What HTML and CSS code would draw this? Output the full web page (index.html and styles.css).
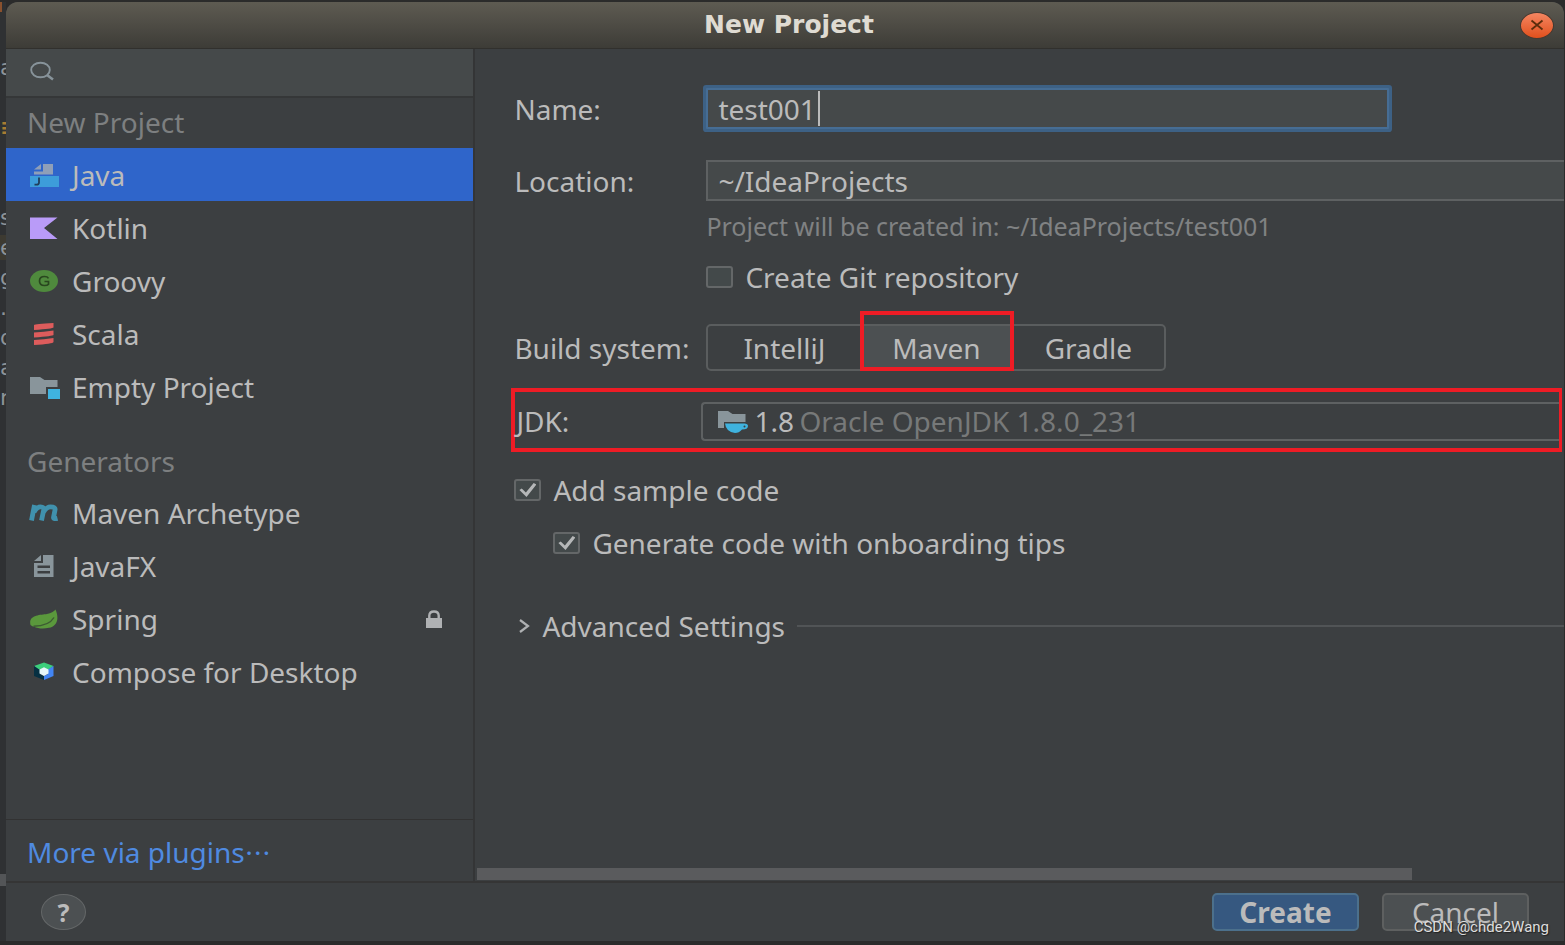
FILE: index.html
```html
<!DOCTYPE html>
<html lang="en">
<head>
<meta charset="utf-8">
<title>New Project</title>
<link rel="stylesheet" href="styles.css">
</head>
<body>
<div class="desktop">
  <div class="editor-edge" aria-hidden="true">
    <i class="edge-mark"></i>
    <pre class="edge-code">a

<b>≡</b>


s
<span>e</span>
g
.
d
a
n</pre>
    <i class="edge-scroll"></i>
  </div>
  <section class="dialog" aria-label="New Project">
    <header class="titlebar">
      <h1 class="title">New Project</h1>
      <button class="close" type="button" aria-label="Close">
        <svg width="14" height="12" viewBox="0 0 14 12"><path d="M1.500 1.500 L12.500 10.500 M12.500 1.500 L1.500 10.500" stroke="#5b2d0c" stroke-width="1.800" fill="none"/></svg>
      </button>
    </header>
    <div class="content">
      <aside class="sidebar">
        <label class="search">
          <svg width="26" height="20" viewBox="0 0 26 20" fill="none" stroke="#87939a" stroke-width="1.900"><ellipse cx="10.500" cy="9" rx="9.300" ry="7.300"/><path d="M17 14 L23 18.500" stroke-width="2.600"/></svg>
          <input type="text" aria-label="Search">
        </label>
        <nav class="list">
          <h2 class="heading">New Project</h2>
          <button class="item selected" type="button">
            <svg class="icon" viewBox="0 0 32 24"><path d="M5 6.500 L12 1 V6.500Z M14 1 H24 V11.500 H5 V8.500 H14Z" fill="#8f9fb8"/><rect x="1" y="13" width="29" height="11" fill="#3d9dda"/><path d="M10 14.500 V19.500 Q10 21.700 7.500 21.700 H5.500" fill="none" stroke="#213e5a" stroke-width="1.800"/></svg>Java</button>
          <button class="item" type="button">
            <svg class="icon" viewBox="0 0 32 24"><path d="M1 1.500 H28.500 L15 12 L28.500 23 H1Z" fill="#b99bf8"/></svg>Kotlin</button>
          <button class="item" type="button">
            <svg class="icon" viewBox="0 0 32 24"><ellipse cx="15" cy="12" rx="14" ry="11" fill="#4f8a3d"/><path d="M19.500 9.300 Q18.500 7.500 15.500 7.500 Q10.500 7.500 10.500 12 Q10.500 16.500 15.500 16.500 Q18.500 16.500 19.500 15.300 V12.500 H15.500" fill="none" stroke="#29471f" stroke-width="1.700"/></svg>Groovy</button>
          <button class="item" type="button">
            <svg class="icon" viewBox="0 0 32 24"><g fill="#dd5c5c"><path d="M5 3 Q6 2.200 24.500 1 V5.500 Q24 6.700 5 8Z"/><path d="M5 10.500 Q15 10 24.500 8.500 V13 Q24 14 5 15.500Z"/><path d="M5 18 Q15 17.500 24.500 16 V20 Q24 22 5 23Z"/></g></svg>Scala</button>
          <button class="item" type="button">
            <svg class="icon" viewBox="0 0 32 24"><path d="M1 2 H11 L15.500 5 H28.500 V12 H17 V19 H1Z" fill="#89959b"/><rect x="19" y="14" width="12" height="10" fill="#3fb3df"/></svg>Empty Project</button>
          <h2 class="heading generators">Generators</h2>
          <button class="item" type="button">
            <svg class="icon" viewBox="0 0 32 24"><path d="M2.500 19.500 L5.500 4 M5 11 Q8 5.800 11.500 5.800 Q15.500 5.800 14.700 9 L12.500 19.500 M14.500 11 Q17.500 5.800 21.500 5.800 Q26.800 5.800 26 9 L24.500 16.500 Q24.500 18.300 28.500 17.300" fill="none" stroke="#4091ad" stroke-width="4.800"/></svg>Maven Archetype</button>
          <button class="item" type="button">
            <svg class="icon" viewBox="0 0 32 24"><path fill-rule="evenodd" d="M5 7 L12 1 V7Z M14 1 H24.500 V23 H5 V9 H14Z M8.500 11.500 V14 H21 V11.500Z M8.500 17 V19.500 H21 V17Z" fill="#89959b"/></svg>JavaFX</button>
          <button class="item" type="button">
            <svg class="icon" viewBox="0 0 32 24"><path d="M1.500 18 C-1 8 11 8 18 7 Q24 5.500 26.500 2.500 C31 13 27 19.500 20 20.800 C14 22 9 21.500 5 19.700 Q3.500 19.600 1.500 18Z" fill="#5a983c"/><path d="M4.500 19.300 Q20 19 25 10.500" fill="none" stroke="#3d5b33" stroke-width="1.400"/></svg>Spring
            <svg class="lock" viewBox="0 0 16 18"><rect x="0" y="8" width="16" height="10" fill="#afb1b3"/><path d="M3.300 9 V5.500 Q3.500 1.500 8 1.500 Q12.500 1.500 12.700 5.500 V9" fill="none" stroke="#afb1b3" stroke-width="2.400"/></svg></button>
          <button class="item" type="button">
            <svg class="icon" viewBox="0 0 32 24"><path d="M5 6 L15 2.500 L24.500 6 L19 10 L15 8 L10 10Z" fill="#3ccf7c"/><path d="M5 6 L11 10 V14 L15 16 V20 L5 16Z" fill="#073042"/><path d="M24.500 6 L19 9.500 V14 L15 16 V20 L24.500 16Z" fill="#4285f4"/><path d="M15 7.300 L19.500 9.500 V13.500 L15 16 L10.500 13.500 V9.500Z" fill="#e6f7fa"/></svg>Compose for Desktop</button>
        </nav>
        <div class="more"><a href="#">More via plugins<span class="dots" lang="zh-CN">…</span></a></div>
      </aside>
      <main class="panel">
        <form class="form">
          <div class="row">
            <label for="name">Name:</label>
            <div class="name-box"><input class="field focused" id="name" type="text" value="test001"><i class="caret"></i></div>
          </div>
          <div class="row location">
            <label for="location">Location:</label>
            <input class="field" id="location" type="text" value="~/IdeaProjects">
          </div>
          <p class="hint">Project will be created in: ~/IdeaProjects/test001</p>
          <label class="check git"><input type="checkbox">Create Git repository</label>
          <div class="row build">
            <span id="build-label">Build system:</span>
            <div class="segments" role="group" aria-labelledby="build-label">
              <button type="button">IntelliJ</button>
              <button type="button" class="active" aria-pressed="true">Maven</button>
              <button type="button">Gradle</button>
            </div>
          </div>
          <div class="jdk">
            <label for="jdk">JDK:</label>
            <div class="combo">
              <select id="jdk"><option>Oracle OpenJDK 1.8.0_231</option></select>
              <span class="combo-version">
                <svg class="icon" viewBox="0 0 32 24"><path d="M1 2 H11 L15.500 5 H28.500 V13 H7 V19 H1Z" fill="#89959b"/><path d="M8 14.500 H26 Q31 14 31 17 Q31 20.500 25 20.500 Q22 24 18 24 Q9 23 8 14.500Z" fill="#3fb3df"/><circle cx="27.500" cy="17.500" r="1" fill="#3c3f41"/></svg>1.8</span>
            </div>
          </div>
          <label class="check sample"><input type="checkbox" checked>Add sample code</label>
          <label class="check tips"><input type="checkbox" checked>Generate code with onboarding tips</label>
          <button class="advanced" type="button">
            <svg width="12" height="16" viewBox="0 0 12 16"><path d="M2 2 L10 8 L2 14" fill="none" stroke="#afb1b3" stroke-width="2.200"/></svg>
            Advanced Settings</button>
        </form>
        <div class="scrollbar"></div>
      </main>
    </div>
    <footer class="footer">
      <button class="help" type="button" aria-label="Help">?</button>
      <div class="actions">
        <button class="action primary" type="button">Create</button>
        <button class="action" type="button">Cancel</button>
      </div>
    </footer>
  </section>
  <span class="watermark">CSDN @chde2Wang</span>
</div>
</body>
</html>
```
FILE: styles.css
```css
* { box-sizing: border-box; }
body {
  margin: 0;
  background: #2b2b2b;
  color: #bbbbbb;
  font: 28px/30px "Noto Sans", sans-serif;
}
button, input, select { font: inherit; color: inherit; }
button { border: 0; padding: 0; background: none; }
h1, h2, p { margin: 0; }

.desktop {
  position: relative;
  display: flex;
  min-height: 100vh;
  padding: 2px 1px 4px 0;
}
.editor-edge {
  display: flex;
  flex-direction: column;
  width: 6px;
  overflow: hidden;
  background: #2f3133;
}
.edge-mark { width: 2px; height: 10px; background: #8a512e; }
.edge-code {
  flex: 1;
  margin: 41px 0 0;
  color: #8d9499;
  font: 22px/30px "DejaVu Sans", sans-serif;
}
.edge-code b { color: #a87c32; }
.edge-code span { background: #3d3a31; }
.edge-scroll { height: 12px; margin-bottom: 55px; background: #535557; }

.dialog {
  display: flex;
  flex-direction: column;
  flex: 1;
  min-width: 0;
  background: #3c3f41;
  border-radius: 12px 12px 0 0;
  overflow: hidden;
}
.titlebar {
  display: grid;
  grid-template-columns: 1fr auto 1fr;
  align-items: center;
  height: 47px;
  padding: 0 10px 0 18px;
  background: linear-gradient(#5e5b52, #3d3c37);
  border-bottom: 1px solid #31302d;
}
.title {
  grid-column: 2;
  color: #dfdbd2;
  font: bold 25px/30px "DejaVu Sans", sans-serif;
}
.close {
  display: grid;
  place-items: center;
  justify-self: end;
  width: 34px;
  height: 27px;
  border: 1px solid #453a32;
  border-radius: 50%;
  background: linear-gradient(#f58661, #e0501d);
}

.content { display: flex; flex: 1; }
.sidebar {
  display: flex;
  flex-direction: column;
  box-sizing: content-box;
  width: 30%;
  border-right: 2px solid #343536;
}
.search {
  display: flex;
  align-items: center;
  gap: 12px;
  height: 49px;
  padding: 0 24px 3px;
  background: #45494a;
  border-bottom: 2px solid #353738;
}
.search input {
  flex: 1;
  min-width: 0;
  border: 0;
  outline: 0;
  background: transparent;
}
.list { flex: 1; }
.heading {
  padding: 9px 21px 11px;
  color: #7d7f80;
  font-size: 28px;
  font-weight: 400;
  line-height: 30px;
}
.generators { padding: 33px 21px 10px; }
.item {
  display: flex;
  align-items: center;
  gap: 11px;
  width: 100%;
  height: 53px;
  padding: 0 31px 0 23px;
  text-align: left;
}
.item.selected { background: #2f65ca; }
.icon { flex: none; width: 32px; height: 24px; }
.lock { width: 16px; height: 18px; margin-left: auto; }
.more {
  padding: 17px 21px 14px;
  border-top: 1px solid #323232;
}
.more a { color: #4f8ae0; text-decoration: none; }
.dots { font: 26px/1 "Noto Sans CJK SC", sans-serif; }

.panel {
  display: flex;
  flex-direction: column;
  justify-content: space-between;
  flex: 1;
  min-width: 0;
  padding: 39px 0 1px 2px;
}
.form { display: flex; flex-direction: column; align-items: stretch; padding-left: 37px; }
.row {
  display: grid;
  grid-template-columns: 192px 1fr;
  align-items: center;
}
.name-box { position: relative; display: flex; width: calc(100% - 175px); }
.field {
  width: 100%;
  height: 41px;
  padding: 0 10px;
  border: 2px solid #5e6162;
  border-right: 0;
  border-radius: 0;
  outline: 0;
  background: #45494a;
}
.field.focused {
  border: 2px solid #466d94;
  box-shadow: 0 0 0 3px #3d6185;
  border-radius: 1px;
}
.caret {
  position: absolute;
  left: 112px;
  top: 3px;
  width: 2px;
  height: 35px;
  background: #bbbbbb;
}
.location { margin-top: 31px; }
.hint {
  margin: 10px 0 0 192px;
  color: #808283;
  font-size: 25px;
}
.check {
  display: flex;
  align-items: center;
  align-self: flex-start;
  gap: 12px;
}
.check input {
  appearance: none;
  display: grid;
  place-items: center;
  width: 27px;
  height: 22px;
  margin: 0;
  border: 2px solid #646768;
  border-radius: 3px;
  background: #43494a;
}
.check input:checked::before {
  content: "";
  width: 17px;
  height: 14px;
  background: #b5b7b8;
  clip-path: polygon(0 50%, 14% 40%, 38% 68%, 84% 0, 100% 10%, 42% 100%);
}
.git { margin: 21px 0 0 192px; }
.build { margin-top: 32px; }
.segments {
  display: flex;
  justify-self: start;
  height: 47px;
  border: 2px solid #5a5d5e;
  border-radius: 5px;
}
.segments button { min-width: 152px; padding: 0 30px; }
.segments .active {
  position: relative;
  background: #4c5052;
}
.segments .active::after {
  content: "";
  position: absolute;
  inset: -15px -2px -2px 0;
  border: 4px solid #ee1c25;
}
.jdk {
  display: grid;
  grid-template-columns: 185px 1fr;
  align-items: center;
  height: 64px;
  margin: 17px 2px 0 -3px;
  padding: 2px 0 0 1px;
  border: 4px solid #ee1c25;
  border-right-width: 3px;
}
.combo { position: relative; display: flex; }
.combo select {
  appearance: none;
  width: 100%;
  height: 39px;
  padding: 0 0 0 96px;
  border: 2px solid #5e6162;
  border-right: 0;
  border-radius: 4px 0 0 4px;
  background: #3c3f41;
  color: #777979;
  line-height: 35px;
}
.combo-version {
  position: absolute;
  left: 16px;
  top: 4px;
  display: flex;
  align-items: center;
  gap: 5px;
  pointer-events: none;
}
.sample { margin-top: 23px; }
.tips { margin: 23px 0 0 39px; }
.advanced {
  display: flex;
  align-items: center;
  gap: 12px;
  margin-top: 53px;
  padding-left: 4px;
}
.advanced::after {
  content: "";
  flex: 1;
  height: 2px;
  background: #515456;
}
.scrollbar { width: 86%; height: 12px; background: #5a5b5d; }

.footer {
  display: flex;
  align-items: center;
  justify-content: space-between;
  height: 60px;
  padding: 0 35px;
  border-top: 2px solid #353535;
}
.help {
  width: 45px;
  height: 36px;
  border: 1px solid #646768;
  border-radius: 50%;
  background: #4c5052;
  font-size: 25px;
  font-weight: 700;
}
.actions { display: flex; gap: 23px; }
.action {
  width: 147px;
  height: 38px;
  border: 2px solid #5e6060;
  border-radius: 5px;
  background: #4c5052;
}
.action.primary {
  border-color: #4c708c;
  background: #365880;
  font-weight: 700;
}
.watermark {
  position: absolute;
  right: 16px;
  bottom: 8px;
  color: #dedede;
  font: 15px/20px Roboto, sans-serif;
  text-shadow: 1px 1px 1px #222222;
}
```
